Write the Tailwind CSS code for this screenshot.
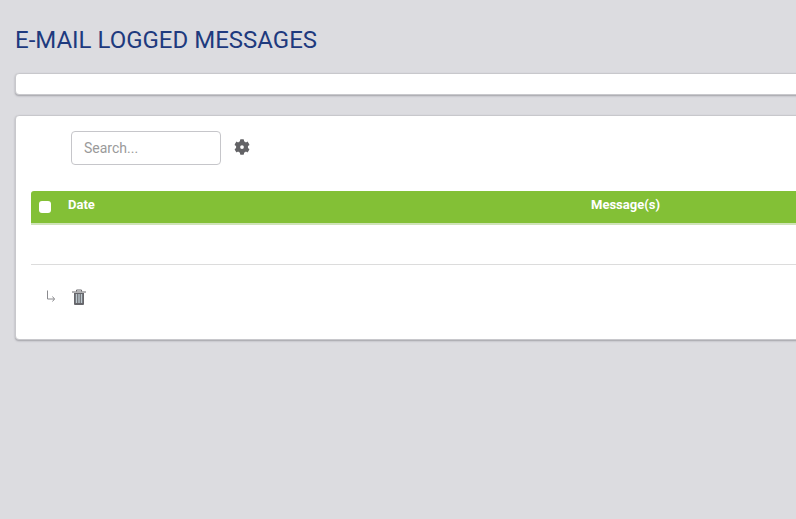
<!DOCTYPE html>
<html lang="en">
<head>
  <meta charset="UTF-8" />
  <title>E-mail Logged Messages</title>
  <script src="https://cdn.jsdelivr.net/npm/@tailwindcss/browser@4"></script>
</head>
<body class="bg-[#dcdce0] h-[519px] w-[796px] overflow-hidden font-['Roboto',sans-serif]">
  <div class="pl-[15px] pt-[27px] w-[830px]">
    <h1 class="text-[24px] leading-[27px] text-[#1e3a7e] font-normal">E-MAIL LOGGED MESSAGES</h1>

    <!-- Empty filter card -->
    <div class="mt-[19px] h-[22px] bg-white rounded-[4px] border border-[#c8c8cc] shadow-[0_1px_2px_#a0a0a6]"></div>

    <!-- Main card -->
    <div class="mt-[20px] h-[225px] bg-white rounded-[4px] border border-[#c8c8cc] shadow-[0_1px_2px_#a0a0a6] pl-[15px] pt-[15px]">
      <div class="flex items-center pl-[40px] gap-[13px]">
        <input type="text" placeholder="Search..." class="w-[150px] h-[34px] px-[12px] text-[14px] rounded-[4px] border border-[#c6c6ca] bg-white placeholder:text-[#9a9a9a] outline-none">
        <svg class="w-[16px] h-[16px] fill-[#636366] mb-[2px]" viewBox="0 0 512 512"><path fill-rule="evenodd" d="M487 316l-42-25a194 194 0 0 0 0-70l42-25c5-3 7-9 5-14-11-36-30-68-55-95-4-4-10-5-14-2l-42 25a190 190 0 0 0-61-35V26c0-6-4-10-9-11-37-8-74-8-109 0-5 1-9 5-9 11v49a196 196 0 0 0-61 35L90 85c-5-3-11-2-14 2-25 27-44 59-55 95-2 5 0 11 5 14l42 25a194 194 0 0 0 0 70l-42 25c-5 3-7 9-5 14 11 36 30 68 55 95 4 4 10 5 14 2l42-25a190 190 0 0 0 61 35v49c0 6 4 10 9 11 37 8 74 8 109 0 5-1 9-5 9-11v-49a196 196 0 0 0 61-35l42 25c5 3 11 2 14-2 25-27 44-59 55-95 2-5 0-11-5-14zM256 316a60 60 0 1 1 0-120 60 60 0 0 1 0 120z"/></svg>
      </div>

      <!-- Table header -->
      <div class="mt-[26px] h-[34px] flex bg-[#83c036] border-b-2 border-[#cfe3b8] rounded-tl-[3px] text-white text-[13px] font-bold">
        <div class="w-[37px] flex items-center pl-[8px] pb-[1px]">
          <span class="w-[12px] h-[12px] bg-white rounded-[3px]"></span>
        </div>
        <div class="w-[523px] pt-[6px] leading-[15px]">Date</div>
        <div class="flex-1 pt-[6px] leading-[15px]">Message(s)</div>
      </div>

      <!-- Empty body -->
      <div class="h-[40px] border-b border-[#dcdcdc]"></div>

      <!-- Bulk actions -->
      <div class="flex items-center pl-[15px] gap-[16px] mt-[24px]">
        <svg class="w-[10px] h-[12px] stroke-[#8a8a8e] fill-none mb-[2px]" viewBox="0 0 10 12"><path d="M1.500 .5V9h7M6.500 6.500 8.500 9 6.500 11.500"/></svg>
        <svg class="w-[14px] h-[16px]" viewBox="0 0 14 16">
          <path d="M0 3h14M4.500 2.500V1h5v1.500" class="fill-none stroke-[#66666b]"/>
          <path d="M2 4h10v11a1 1 0 0 1-1 1H3a1 1 0 0 1-1-1z" class="fill-[#66666b]"/>
          <path d="M4.500 5v9M7 5v9M9.500 5v9" class="stroke-[#bcc8ce] stroke-[1.400]"/>
        </svg>
      </div>
    </div>
  </div>
</body>
</html>
